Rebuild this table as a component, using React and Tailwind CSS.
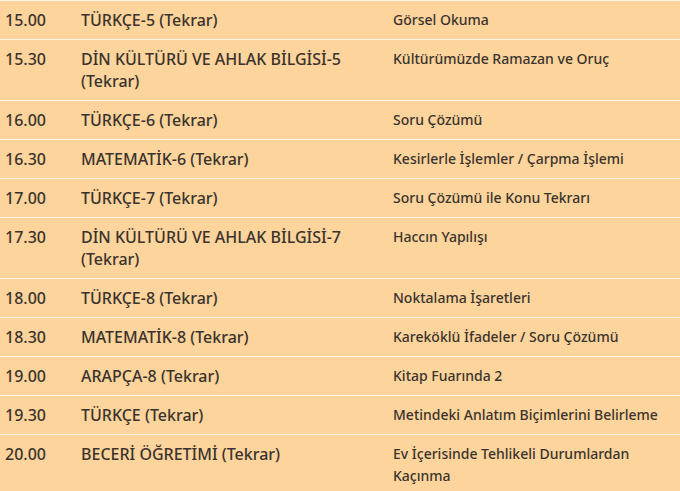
import React from "react";

const rows = [
  { time: "15.00", subject: "TÜRKÇE-5 (Tekrar)", topic: "Görsel Okuma" },
  { time: "15.30", subject: "DİN KÜLTÜRÜ VE AHLAK BİLGİSİ-5 (Tekrar)", topic: "Kültürümüzde Ramazan ve Oruç" },
  { time: "16.00", subject: "TÜRKÇE-6 (Tekrar)", topic: "Soru Çözümü" },
  { time: "16.30", subject: "MATEMATİK-6 (Tekrar)", topic: "Kesirlerle İşlemler / Çarpma İşlemi" },
  { time: "17.00", subject: "TÜRKÇE-7 (Tekrar)", topic: "Soru Çözümü ile Konu Tekrarı" },
  { time: "17.30", subject: "DİN KÜLTÜRÜ VE AHLAK BİLGİSİ-7 (Tekrar)", topic: "Haccın Yapılışı" },
  { time: "18.00", subject: "TÜRKÇE-8 (Tekrar)", topic: "Noktalama İşaretleri" },
  { time: "18.30", subject: "MATEMATİK-8 (Tekrar)", topic: "Kareköklü İfadeler / Soru Çözümü" },
  { time: "19.00", subject: "ARAPÇA-8 (Tekrar)", topic: "Kitap Fuarında 2" },
  { time: "19.30", subject: "TÜRKÇE (Tekrar)", topic: "Metindeki Anlatım Biçimlerini Belirleme" },
  { time: "20.00", subject: "BECERİ ÖĞRETİMİ (Tekrar)", topic: "Ev İçerisinde Tehlikeli Durumlardan Kaçınma" },
];

export default function App() {
  return (
    <div className="w-[680px] h-[491px] overflow-hidden bg-[#fdd49c] font-['Noto_Sans',sans-serif] text-[#3a332d]">
      <div className="border-t border-[#fff3e2]">
        {rows.map((row) => (
          <div
            key={row.time}
            className="grid grid-cols-[81px_312px_1fr] border-b border-[#fff3e2] py-2 leading-[22px]"
          >
            <div className="pl-[5px] text-[16px] font-medium">{row.time}</div>
            <div className="pr-3 text-[16px] font-medium">{row.subject}</div>
            <div className="pr-[10px] text-[14px] font-medium">{row.topic}</div>
          </div>
        ))}
      </div>
    </div>
  );
}
